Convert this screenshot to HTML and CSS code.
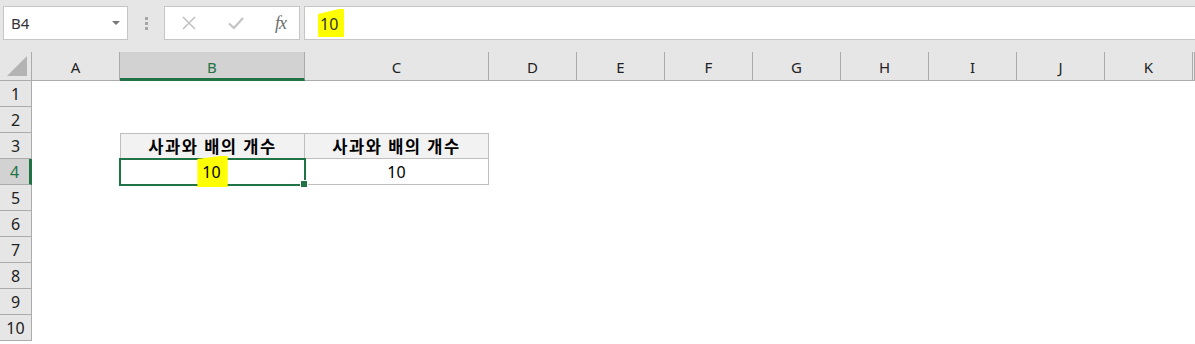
FILE: index.html
```html
<!DOCTYPE html>
<html lang="ko">
<head>
    <meta charset="UTF-8">
    <meta name="viewport" content="width=device-width, initial-scale=1.0">
    <title>사과와 배의 개수</title>
    <link rel="stylesheet" href="styles.css">
</head>
<body>
    <div class="formula-bar">
        <div class="name-box">
            <span>B4</span>
            <svg class="arrow" width="8" height="5" viewBox="0 0 8 5"><path d="M0 0 L8 0 L4 4 Z" fill="#777"/></svg>
        </div>
        <div class="grip">
            <span></span><span></span><span></span>
        </div>
        <div class="buttons">
            <svg width="16" height="16" viewBox="0 0 16 16"><path d="M2 2 L14 14 M14 2 L2 14" stroke="#c3c3c3" stroke-width="1.6" fill="none"/></svg>
            <svg width="18" height="16" viewBox="0 0 18 16"><path d="M2 8.5 L7 13 L16 3" stroke="#c3c3c3" stroke-width="2.2" fill="none"/></svg>
            <span class="fx">fx</span>
        </div>
        <div class="formula-input">
            <span class="mark mark-bar">10</span>
        </div>
    </div>

    <div class="sheet">
        <div class="corner"><span class="tri"></span></div>
        <div class="col-head">A</div>
        <div class="col-head active">B</div>
        <div class="col-head">C</div>
        <div class="col-head">D</div>
        <div class="col-head">E</div>
        <div class="col-head">F</div>
        <div class="col-head">G</div>
        <div class="col-head">H</div>
        <div class="col-head">I</div>
        <div class="col-head">J</div>
        <div class="col-head">K</div>
        <div class="col-head"></div>

        <div class="row-head">1</div><div class="cell full"></div>
        <div class="row-head">2</div><div class="cell full"></div>

        <div class="row-head">3</div>
        <div class="cell"></div>
        <div class="cell tbl th first-col">사과와 배의 개수</div>
        <div class="cell tbl th">사과와 배의 개수</div>
        <div class="cell rest"></div>

        <div class="row-head active">4</div>
        <div class="cell"></div>
        <div class="cell tbl first-col selected"><span class="mark mark-cell">10</span><span class="handle"></span></div>
        <div class="cell tbl">10</div>
        <div class="cell rest"></div>

        <div class="row-head">5</div><div class="cell full"></div>
        <div class="row-head">6</div><div class="cell full"></div>
        <div class="row-head">7</div><div class="cell full"></div>
        <div class="row-head">8</div><div class="cell full"></div>
        <div class="row-head">9</div><div class="cell full"></div>
        <div class="row-head">10</div><div class="cell full"></div>
    </div>
</body>
</html>
```

FILE: styles.css
```css
body {
    margin: 0;
    width: 1195px;
    height: 344px;
    overflow: hidden;
    background-color: #fff;
    font-family: "Noto Sans", "Noto Sans CJK KR", sans-serif;
    color: #000;
}

/* formula bar */
.formula-bar {
    display: flex;
    align-items: center;
    height: 52px;
    padding: 6px 0 12px 3px;
    box-sizing: border-box;
    background-color: #e6e6e6;
}

.name-box {
    display: flex;
    align-items: center;
    justify-content: space-between;
    width: 125px;
    height: 34px;
    padding: 0 7px 0 7px;
    box-sizing: border-box;
    background-color: #fff;
    border: 1px solid #c6c6c6;
    font-size: 15px;
    color: #333;
}

.grip {
    display: flex;
    flex-direction: column;
    gap: 2px;
    margin: 0 16px 0 17px;
}

.grip span {
    width: 3px;
    height: 3px;
    background-color: #a6a6a6;
}

.buttons {
    display: flex;
    align-items: center;
    justify-content: space-between;
    width: 136px;
    height: 34px;
    padding: 0 13px 0 16px;
    box-sizing: border-box;
    background-color: #fff;
    border: 1px solid #c6c6c6;
}

.fx {
    font-family: "Liberation Serif", serif;
    font-style: italic;
    font-size: 18px;
    color: #6e6e6e;
    letter-spacing: -1px;
}

.formula-input {
    flex: 1;
    display: flex;
    align-items: center;
    height: 34px;
    margin-left: 4px;
    padding-left: 13px;
    box-sizing: border-box;
    background-color: #fff;
    border: 1px solid #c6c6c6;
    border-right: none;
    font-size: 16px;
    color: #333;
}

.mark {
    background-color: #ffff00;
}

.mark-bar {
    padding: 4px 6px 2px 2px;
    clip-path: polygon(0 18%, 80% 0, 100% 0, 100% 100%, 0 100%);
}

.mark-cell {
    padding: 5px 7px 4px 5px;
    clip-path: polygon(0 10%, 75% 0, 100% 0, 100% 100%, 0 100%);
}

/* sheet */
.sheet {
    display: grid;
    grid-template-columns: 32px 88px 185px 184px repeat(8, 88px) 1fr;
    grid-template-rows: 29px;
    grid-auto-rows: 26px;
    font-size: 15px;
}

.corner {
    position: relative;
    background-color: #e6e6e6;
    border-right: 1px solid #ababab;
    border-bottom: 1px solid #ababab;
}

.tri {
    position: absolute;
    right: 4px;
    bottom: 4px;
    width: 0;
    height: 0;
    border-left: 20px solid transparent;
    border-bottom: 20px solid #b4b4b4;
}

.col-head {
    display: flex;
    align-items: center;
    justify-content: center;
    padding-top: 2px;
    box-sizing: border-box;
    background-color: #e6e6e6;
    border-right: 1px solid #ababab;
    border-bottom: 1px solid #ababab;
    color: #222;
}

.col-head.active {
    background-color: #d2d2d2;
    border-bottom: 3px solid #217346;
    color: #217346;
    padding-top: 4px;
}

.row-head {
    display: flex;
    align-items: center;
    justify-content: center;
    box-sizing: border-box;
    background-color: #e6e6e6;
    border-right: 1px solid #ababab;
    border-bottom: 1px solid #ababab;
    color: #222;
    font-size: 16px;
}

.row-head.active {
    background-color: #d2d2d2;
    border-right: 3px solid #217346;
    color: #217346;
}

.cell {
    display: flex;
    align-items: center;
    justify-content: center;
    box-sizing: border-box;
    font-size: 16px;
}

.full {
    grid-column: 2 / -1;
}

.rest {
    grid-column: 5 / -1;
}

.tbl {
    border-right: 1px solid #bfbfbf;
    border-bottom: 1px solid #bfbfbf;
}

.tbl.first-col {
    border-left: 1px solid #bfbfbf;
}

.th {
    border-top: 1px solid #bfbfbf;
    background-color: #f2f2f2;
    font-weight: bold;
    letter-spacing: 1.5px;
    font-size: 16.5px;
}

.selected {
    position: relative;
    z-index: 1;
    outline: 2px solid #217346;
    outline-offset: -1px;
}

.handle {
    position: absolute;
    right: -4px;
    bottom: -4px;
    width: 6px;
    height: 6px;
    background-color: #217346;
    border: 1px solid #fff;
}
```
